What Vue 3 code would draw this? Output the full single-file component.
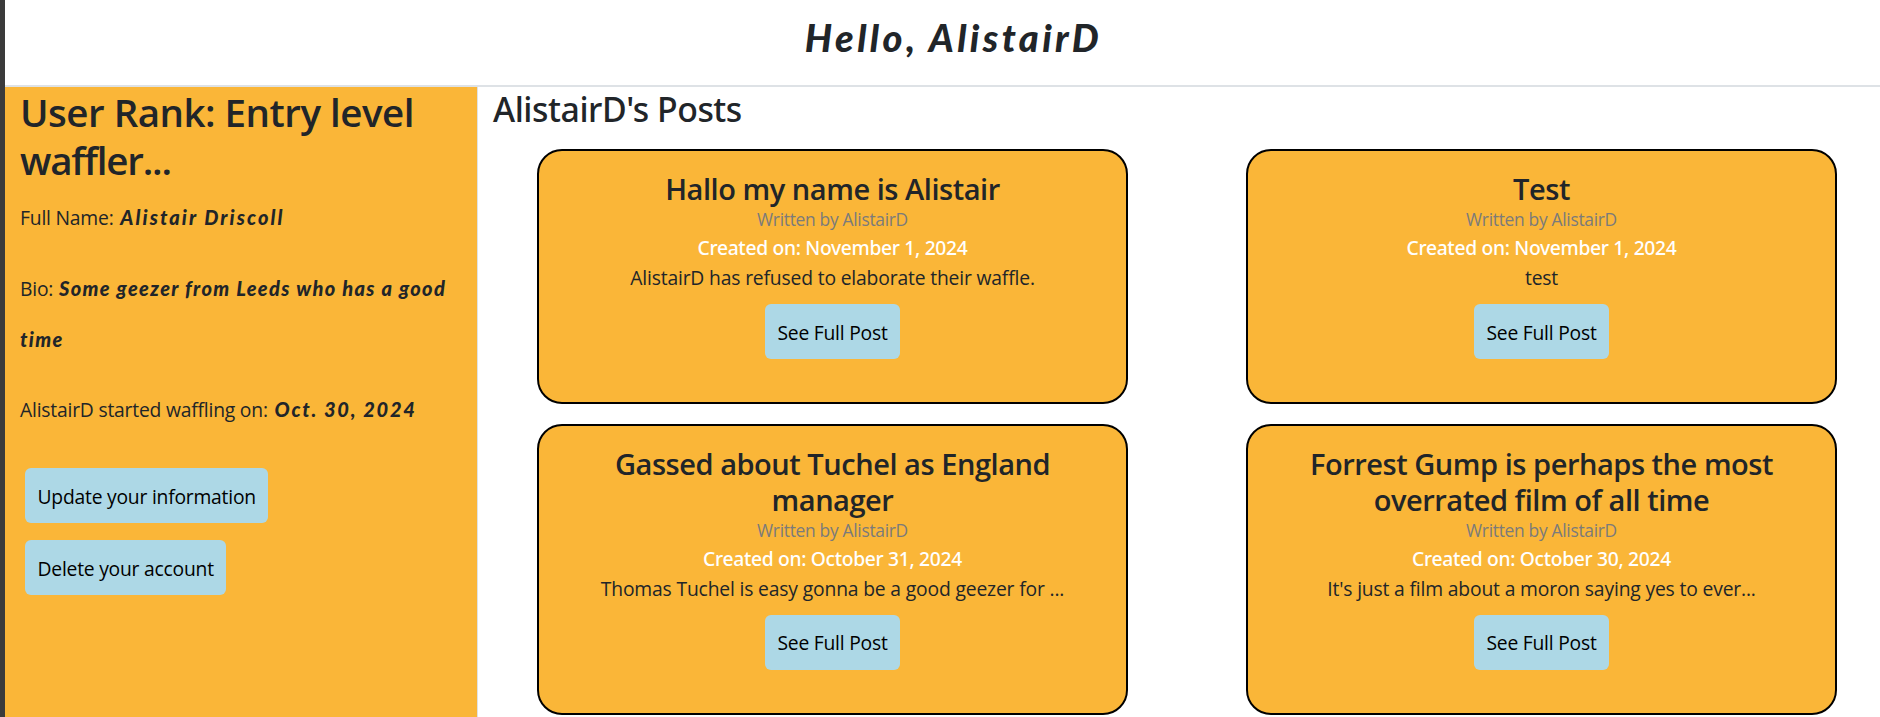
<script setup>
const user = 'AlistairD'

const posts = [
  { title: 'Hallo my name is Alistair', date: 'November 1, 2024', body: 'AlistairD has refused to elaborate their waffle.' },
  { title: 'Test', date: 'November 1, 2024', body: 'test' },
  { title: 'Gassed about Tuchel as England manager', date: 'October 31, 2024', body: 'Thomas Tuchel is easy gonna be a good geezer for ...' },
  { title: 'Forrest Gump is perhaps the most overrated film of all time', date: 'October 30, 2024', body: "It's just a film about a moron saying yes to ever..." },
]
</script>

<template>
  <div class="page">
    <header class="header">
      <h1 class="greeting">Hello, {{ user }}</h1>
    </header>
    <main class="content">
      <aside class="sidebar">
        <h1 class="rank">User Rank: Entry level <span class="tight">waffler...</span></h1>
        <p class="info">Full Name: <span class="hand name">Alistair Driscoll</span></p>
        <p class="info bio-line">Bio: <span class="hand bio">Some geezer from Leeds who has a good time</span></p>
        <p class="info">{{ user }} started waffling on: <span class="hand date">Oct. 30, 2024</span></p>
        <div class="actions">
          <button class="btn">Update your information</button>
          <button class="btn">Delete your account</button>
        </div>
      </aside>
      <section class="feed">
        <h2 class="feed-title">{{ user }}'s Posts</h2>
        <div class="grid">
          <article v-for="post in posts" :key="post.title" class="card">
            <h3 class="card-title">{{ post.title }}</h3>
            <p class="author">Written by {{ user }}</p>
            <p class="created">Created on: {{ post.date }}</p>
            <p class="excerpt">{{ post.body }}</p>
            <button class="btn">See Full Post</button>
          </article>
        </div>
      </section>
    </main>
  </div>
</template>

<style>
body {
  margin: 0;
  overflow: hidden;
}
</style>

<style scoped>
.page {
  box-sizing: border-box;
  height: 717px;
  display: flex;
  flex-direction: column;
  border-left: 5px solid #3b3b3b;
  background: #fff;
  color: #212529;
  font-family: "Open Sans", "Noto Sans", sans-serif;
  font-size: 19.3px;
  letter-spacing: -0.2px;
  overflow: hidden;
}

h1, h2, h3, p {
  margin: 0;
}

.header {
  box-sizing: border-box;
  flex: none;
  height: 87px;
  border-bottom: 2px solid #dee2e6;
  text-align: center;
}

.greeting {
  padding: 7px 0 0 22px;
  font-family: Lato, sans-serif;
  font-size: 38px;
  font-weight: 900;
  font-style: italic;
  line-height: 60px;
  letter-spacing: 3.4px;
}

.content {
  flex: 1;
  min-height: 0;
  display: flex;
}

.sidebar {
  box-sizing: border-box;
  flex: none;
  width: 473px;
  padding: 1px 15px 0 15px;
  border-right: 1px solid #dee2e6;
  background: #fab638;
}

.rank {
  margin-bottom: 8px;
  font-size: 38.5px;
  font-weight: 600;
  line-height: 48px;
  letter-spacing: -0.5px;
}

.tight { letter-spacing: -1.2px; }

.info {
  margin-bottom: 20px;
  line-height: 51px;
}

.bio-line {
  margin-bottom: 19px;
}

.hand {
  font-family: Lato, sans-serif;
  font-size: 20px;
  font-weight: 900;
  font-style: italic;
  line-height: 1;
}

.name { letter-spacing: 2.1px; margin-left: 2px; }
.bio { letter-spacing: 1.35px; margin-left: 1px; }
.date { letter-spacing: 1.75px; margin-left: 2px; }

.actions {
  display: flex;
  flex-direction: column;
  align-items: flex-start;
  gap: 17px;
  padding: 13px 0 0 5px;
}

.btn {
  box-sizing: border-box;
  height: 55px;
  padding: 1px 12.5px 0;
  border: 0;
  border-radius: 6px;
  background: #add8e6;
  color: #000;
  font: inherit;
  letter-spacing: -0.22px;
  white-space: nowrap;
}

.feed {
  flex: none;
  width: 1418px;
}

.feed-title {
  padding: 1px 15px 0;
  font-family: "Noto Sans", sans-serif;
  font-size: 33.8px;
  font-weight: 500;
  line-height: 42px;
  letter-spacing: -0.45px;
}

.grid {
  display: grid;
  grid-template-columns: 591px 591px;
  column-gap: 118px;
  row-gap: 20.3px;
  padding: 19px 0 0 59px;
}

.card {
  box-sizing: border-box;
  display: flex;
  flex-direction: column;
  align-items: center;
  padding: 20px 40px 42.7px;
  border: 2px solid #000;
  border-radius: 25px;
  background: #fab638;
  text-align: center;
}

.card-title {
  font-size: 29px;
  font-weight: 600;
  line-height: 36px;
  letter-spacing: -0.46px;
}

.author {
  margin-bottom: 1px;
  color: #7b7b7b;
  font-size: 17.4px;
  line-height: 25px;
  letter-spacing: -0.3px;
}

.created {
  color: #fff;
  font-family: "Noto Sans", sans-serif;
  font-weight: 500;
  line-height: 30px;
  letter-spacing: -0.33px;
}

.excerpt {
  margin-bottom: 11px;
  line-height: 30px;
  letter-spacing: -0.16px;
}
</style>
